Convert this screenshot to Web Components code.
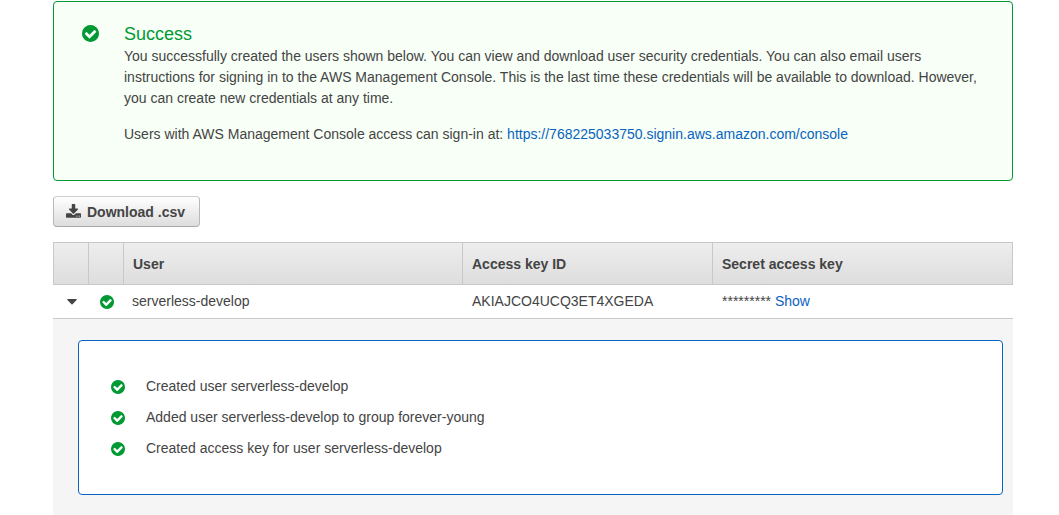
<!DOCTYPE html>
<html lang="en">
<head>
<meta charset="utf-8">
<title>Add user</title>
<style>
  body { margin: 0; background: #fff; color: #444; font: 14px/21px "Liberation Sans", Arial, sans-serif; }
  a { color: #0a63bf; text-decoration: none; }
</style>
</head>
<body>
<iam-page>
  <iam-alert heading="Success">
    <p>You successfully created the users shown below. You can view and download user security credentials. You can also email users instructions for signing in to the AWS Management Console. This is the last time these credentials will be available to download. However, you can create new credentials at any time.</p>
    <p>Users with AWS Management Console access can sign-in at: <a href="https://768225033750.signin.aws.amazon.com/console">https://768225033750.signin.aws.amazon.com/console</a></p>
  </iam-alert>
  <iam-download>Download .csv</iam-download>
  <iam-user-table>
    <span slot="user">serverless-develop</span>
    <span slot="key">AKIAJCO4UCQ3ET4XGEDA</span>
    <iam-steps slot="details">
      <iam-step>Created user serverless-develop</iam-step>
      <iam-step>Added user serverless-develop to group forever-young</iam-step>
      <iam-step>Created access key for user serverless-develop</iam-step>
    </iam-steps>
  </iam-user-table>
</iam-page>

<script>
const define = (name, html, setup) => {
  const template = document.createElement('template');
  template.innerHTML = html;
  customElements.define(name, class extends HTMLElement {
    constructor() {
      super();
      this.attachShadow({ mode: 'open' }).append(template.content.cloneNode(true));
    }
    connectedCallback() { if (setup) setup(this, this.shadowRoot); }
  });
};

define('iam-check', `
  <style>
    :host { display: block; flex: none; width: var(--size, 14px); height: var(--size, 14px); color: #093; }
    svg { display: block; width: 100%; height: 100%; fill: currentColor; }
  </style>
  <svg viewBox="0 0 1536 1536" aria-hidden="true"><path d="M1284 606q0-28-18-46l-91-90q-19-19-45-19t-45 19l-408 407-226-226q-19-19-45-19t-45 19l-91 90q-18 18-18 46 0 27 18 45l362 362q19 19 45 19 27 0 46-19l543-543q18-18 18-45zm252 162q0 209-103 385.500t-279.500 279.500-385.500 103-385.500-103-279.500-279.500-103-385.500 103-385.500 279.500-279.500 385.500-103 385.500 103 279.500 279.500 103 385.500z"/></svg>`);

define('iam-page', `
  <style>
    :host { display: flex; flex-direction: column; align-items: stretch; gap: 15px; padding: 1px 46px 0 53px; }
  </style>
  <slot></slot>`);

define('iam-alert', `
  <style>
    :host { display: flex; gap: 25px; padding: 20px 24px 35px 28px; border: 1px solid #093; border-radius: 4px; background: #f7fff7; }
    iam-check { --size: 17px; margin-top: 3px; }
    h2 { margin: 0; color: #093; font-size: 18px; font-weight: 400; line-height: 24px; }
    .text { display: flex; flex-direction: column; gap: 15px; }
    ::slotted(p) { margin: 0; }
  </style>
  <iam-check></iam-check>
  <div><h2></h2><div class="text"><slot></slot></div></div>`,
  (host, root) => {
    root.querySelector('h2').textContent = host.getAttribute('heading');
  });

define('iam-download', `
  <style>
    :host { display: flex; }
    button { display: flex; align-items: center; gap: 6px; height: 31px; margin: 0; padding: 0 14px 0 12px; border: 1px solid #bbb; border-color: #ccc #b8b8b8 #aaa; border-radius: 4px; background: linear-gradient(#fff, #ddd); color: #444; font: bold 14px/21px "Liberation Sans", Arial, sans-serif; }
    span { padding-top: 2px; }
    svg { width: 15px; height: 15px; fill: currentColor; }
  </style>
  <button type="button">
    <svg viewBox="64 0 1664 1664" aria-hidden="true"><path d="M1344 1344q0-26-19-45t-45-19-45 19-19 45 19 45 45 19 45-19 19-45zm256 0q0-26-19-45t-45-19-45 19-19 45 19 45 45 19 45-19 19-45zm128-224v320q0 40-28 68t-68 28h-1472q-40 0-68-28t-28-68v-320q0-40 28-68t68-28h465l135 136q58 56 136 56t136-56l136-136h464q40 0 68 28t28 68zm-325-569q17 41-14 70l-448 448q-18 19-45 19t-45-19l-448-448q-31-29-14-70 17-39 59-39h256v-448q0-26 19-45t45-19h256q26 0 45 19t19 45v448h256q42 0 59 39z"/></svg>
    <span><slot></slot></span>
  </button>`);

define('iam-user-table', `
  <style>
    :host { display: block; }
    table { width: 100%; border-spacing: 0; table-layout: fixed; }
    .narrow { width: 35px; }
    .key { width: 250px; }
    .secret { width: 301px; }
    thead tr { background: linear-gradient(#eee, #ddd); }
    th { box-sizing: border-box; height: 43px; padding: 2px 9px 0; border: 1px solid #c8c8c8; border-right: 0; text-align: left; }
    th:last-child { border-right: 1px solid #c8c8c8; }
    td { box-sizing: border-box; height: 34px; padding: 0 10px 1px; border-bottom: 1px solid #c8c8c8; }
    td.name { padding-left: 9px; }
    td.tick { padding: 0 12px 0; }
    td.toggle { padding: 0; }
    td.details { padding: 21px 10px 20px 25px; border: 0; background: #f5f5f5; }
    button { display: flex; align-items: center; justify-content: center; width: 37px; height: 33px; margin: 0; padding: 0; border: 0; background: none; color: #444; }
    svg { width: 10px; height: 6px; fill: currentColor; }
    a { color: #0a63bf; text-decoration: none; }
  </style>
  <table>
    <colgroup><col class="narrow"><col class="narrow"><col><col class="key"><col class="secret"></colgroup>
    <thead>
      <tr><th></th><th></th><th scope="col">User</th><th scope="col">Access key ID</th><th scope="col">Secret access key</th></tr>
    </thead>
    <tbody>
      <tr>
        <td class="toggle"><button type="button" aria-label="Toggle details" aria-expanded="true"><svg viewBox="0 0 10 6" aria-hidden="true"><path d="M.6 0h8.800q.6.300.2.900L5.500 5.200q-.5.400-1 0L.4.900Q0 .3.600 0z"/></svg></button></td>
        <td class="tick"><iam-check></iam-check></td>
        <td class="name"><slot name="user"></slot></td>
        <td><slot name="key"></slot></td>
        <td>********* <a href="#show">Show</a></td>
      </tr>
      <tr><td class="details" colspan="5"><slot name="details"></slot></td></tr>
    </tbody>
  </table>`);

define('iam-steps', `
  <style>
    :host { display: flex; flex-direction: column; gap: 10px; padding: 35px 32px; border: 1px solid #0a63bf; border-radius: 4px; background: #fff; }
  </style>
  <slot></slot>`);

define('iam-step', `
  <style>
    :host { display: flex; align-items: center; gap: 21px; }
  </style>
  <iam-check></iam-check><span><slot></slot></span>`);
</script>
</body>
</html>
